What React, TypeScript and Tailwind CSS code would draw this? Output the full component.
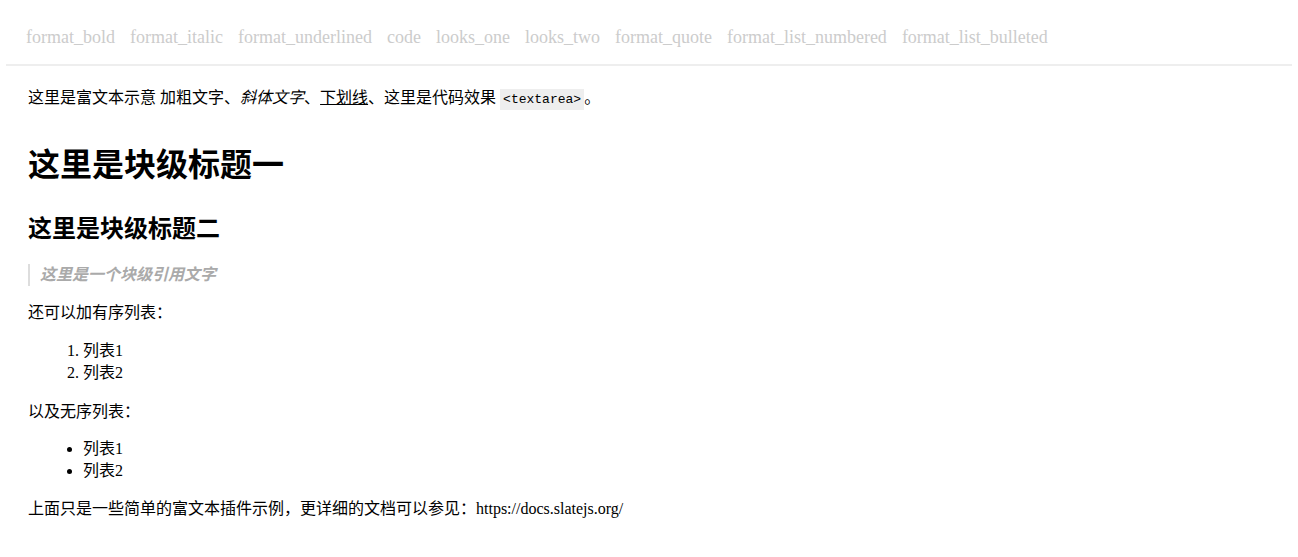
const toolbarItems = [
  'format_bold',
  'format_italic',
  'format_underlined',
  'code',
  'looks_one',
  'looks_two',
  'format_quote',
  'format_list_numbered',
  'format_list_bulleted',
];

function Toolbar() {
  return (
    <div className="-mx-[22px] flex items-center gap-[15px] border-b-2 border-[#eee] px-[20px] pt-[26px] pb-[16px]">
      {toolbarItems.map((item) => (
        <span key={item} className="cursor-pointer text-[18px] leading-[22px] text-[#ccc]">
          {item}
        </span>
      ))}
    </div>
  );
}

export default function App() {
  return (
    <div className="min-h-screen bg-white px-[28px] font-['Liberation_Serif','Noto_Sans_CJK_SC',serif] text-black">
      <Toolbar />

      <div className="flex flex-col text-[16px] leading-[22px]">
        <p className="mt-[21px]">
          这里是富文本示意 <strong className="font-normal">加粗文字</strong>、<em>斜体文字</em>、
          <u>下划线</u>、这里是代码效果{' '}
          <code className="bg-[#eee] p-[3px] font-['Liberation_Mono',monospace] text-[13px]">
            &lt;textarea&gt;
          </code>
          。
        </p>

        <h1 className="mt-[32px] text-[32px] leading-[44px] font-bold">这里是块级标题一</h1>

        <h2 className="mt-[25px] text-[24px] leading-[34px] font-bold">这里是块级标题二</h2>

        <blockquote className="mt-[18px] border-l-2 border-[#ddd] pl-[10px] font-bold text-[#aaa] italic">
          这里是一个块级引用文字
        </blockquote>

        <p className="mt-[16px]">还可以加有序列表：</p>

        <ol className="mt-[16px] list-decimal pl-[55px]">
          <li>列表1</li>
          <li>列表2</li>
        </ol>

        <p className="mt-[17px]">以及无序列表：</p>

        <ul className="mt-[15px] list-disc pl-[55px]">
          <li>列表1</li>
          <li>列表2</li>
        </ul>

        <p className="mt-[16px]">上面只是一些简单的富文本插件示例，更详细的文档可以参见：https://docs.slatejs.org/</p>
      </div>
    </div>
  );
}
